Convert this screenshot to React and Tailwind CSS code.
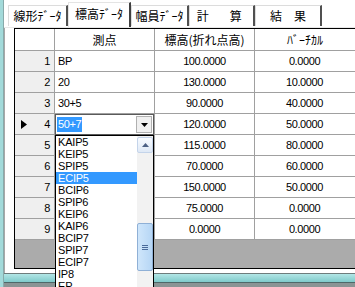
const jp = { fontFamily: '"Noto Sans CJK JP", "Liberation Sans", sans-serif' }
const num = { fontFamily: '"Liberation Sans", "Noto Sans CJK JP", sans-serif' }

const rows = [
  { no: 1, point: "BP", height: "100.0000", vc: "0.0000" },
  { no: 2, point: "20", height: "130.0000", vc: "10.0000" },
  { no: 3, point: "30+5", height: "90.0000", vc: "40.0000" },
  { no: 4, point: "50+7", height: "120.0000", vc: "50.0000" },
  { no: 5, point: "", height: "115.0000", vc: "80.0000" },
  { no: 6, point: "", height: "70.0000", vc: "60.0000" },
  { no: 7, point: "", height: "150.0000", vc: "50.0000" },
  { no: 8, point: "", height: "75.0000", vc: "0.0000" },
  { no: 9, point: "", height: "0.0000", vc: "0.0000" },
]

const items = [
  "KAIP5", "KEIP5", "SPIP5", "ECIP5", "BCIP6", "SPIP6", "KEIP6",
  "KAIP6", "BCIP7", "SPIP7", "ECIP7", "IP8", "EP",
]

function Tab({ children, active, className = "" }) {
  if (active) {
    return (
      <div
        className={`h-[25px] bg-white border-t border-l border-[#e4e4e4] border-r-2 border-r-[#404040] flex items-center justify-center pb-[2px] text-[12px] text-black ${className}`}
        style={jp}
      >
        {children}
      </div>
    )
  }
  return (
    <div
      className={`h-[21px] mb-[1px] border-t border-l border-[#dcdcdc] border-r-2 border-r-[#505050] flex items-center justify-center text-[12px] text-black ${className}`}
      style={jp}
    >
      {children}
    </div>
  )
}

export default function App() {
  return (
    <div className="relative w-[355px] h-[287px] overflow-hidden bg-white flex">
      {/* window frame edge */}
      <div className="w-[4px] shrink-0 bg-[#a3dada] border-r border-[#8aa]" />

      <div className="flex-1 flex flex-col">
        {/* tabs */}
        <div className="h-[28px] flex items-end pl-[4px] border-b border-[#e8e8e8]">
          <Tab className="w-[60px]">線形ﾃﾞｰﾀ</Tab>
          <Tab active className="w-[63px]">標高ﾃﾞｰﾀ</Tab>
          <Tab className="w-[58px]">幅員ﾃﾞｰﾀ</Tab>
          <Tab className="w-[66px]">
            <span className="tracking-[4.5px] whitespace-pre">計　算</span>
          </Tab>
          <Tab className="w-[67px]">結　果</Tab>
        </div>

        {/* panel */}
        <div className="flex-1 flex flex-col pl-[9px] border-l border-[#a8a8a8]">
          <div className="h-[241px] border border-black border-r-0 flex flex-col">
            <div className="h-[22px] flex border-b border-[#a0a0a0] bg-white text-[12px]" style={jp}>
              <div className="w-[40px] border-r border-[#a0a0a0]" />
              <div className="w-[100px] border-r border-[#a0a0a0] flex items-center justify-center">測点</div>
              <div className="w-[100px] border-r border-[#a0a0a0] flex items-center justify-center">標高(折れ点高)</div>
              <div className="w-[100px] flex items-center justify-center">ﾊﾞｰﾁｶﾙ</div>
            </div>
            {rows.map((r) => (
              <div key={r.no} className="h-[21px] flex border-b border-[#a0a0a0] text-[11px] tracking-[-0.4px]" style={num}>
                <div className="w-[40px] border-r border-[#a0a0a0] bg-[#efefef] flex items-center pl-[6px] pr-[4px]">
                  {r.no === 4 && (
                    <svg width="6" height="9" viewBox="0 0 6 9">
                      <path d="M0 0 L6 4.5 L0 9 Z" fill="#000" />
                    </svg>
                  )}
                  <span className="ml-auto">{r.no}</span>
                </div>
                <div className="w-[100px] border-r border-[#a0a0a0] bg-white flex items-center pl-[3px]">{r.point}</div>
                <div className="w-[100px] border-r border-[#a0a0a0] bg-white flex items-center justify-center">{r.height}</div>
                <div className="flex-1 bg-white flex items-center justify-center pr-[1px]">{r.vc}</div>
              </div>
            ))}
            <div className="flex-1 bg-[#ababab]" />
          </div>
          <div className="h-[4px] bg-white" />
        </div>

        {/* bottom frame */}
        <div className="h-[1px] bg-[#6e7c7c]" />
        <div className="h-[8px] bg-gradient-to-b from-[#b2e6e6] to-[#7fcaca]" />
        <div className="h-[1px] bg-[#4f6868]" />
        <div className="h-[4px] bg-[#8a9494]" />
      </div>

      {/* combo box in cell */}
      <div className="absolute left-[55px] top-[114px] w-[99px] h-[21px] bg-white border border-[#5a5a5a] flex items-center pl-[1px] text-[11px] tracking-[-0.4px]" style={num}>
        <span className="bg-[#3399ff] text-white h-[15px] leading-[15px] pl-[1px] pr-[1px] w-[25px]">50+7</span>
        <div className="absolute right-[1px] top-[1px] w-[16px] h-[17px] bg-[#f0f0f0] border border-[#b0b0b0] flex items-center justify-center">
          <svg width="7" height="4" viewBox="0 0 7 4">
            <path d="M0 0 L7 0 L3.5 4 Z" fill="#000" />
          </svg>
        </div>
      </div>

      {/* drop-down list */}
      <div className="absolute left-[55px] top-[135px] w-[99px] h-[160px] bg-white border border-black flex">
        <div className="flex-1 flex flex-col text-[11px] tracking-[-0.2px]" style={num}>
          {items.map((it) => (
            <div
              key={it}
              className={`h-[12px] leading-[12px] pl-[2px] ${it === "ECIP5" ? "bg-[#3399ff] text-white" : "text-black"}`}
            >
              {it}
            </div>
          ))}
        </div>
        <div className="w-[16px] bg-[#f2f2f2] flex flex-col">
          <div className="h-[16px] mt-[1px] rounded-[2px] border border-[#c4d4ea] bg-gradient-to-b from-[#f8fbff] to-[#dfe9f6] flex items-center justify-center">
            <svg width="7" height="4" viewBox="0 0 7 4">
              <path d="M0 4 L3.5 0 L7 4 Z" fill="#4d6185" />
            </svg>
          </div>
          <div className="mt-[70px] h-[48px] rounded-[2px] border border-[#8fb0d6] bg-gradient-to-r from-[#cfe6fb] to-[#b6d6f5] flex flex-col items-center justify-center gap-[1px]">
            <div className="w-[6px] h-[1px] bg-[#4a6a9a]" />
            <div className="w-[6px] h-[1px] bg-[#4a6a9a]" />
            <div className="w-[6px] h-[1px] bg-[#4a6a9a]" />
          </div>
        </div>
      </div>
    </div>
  )
}
